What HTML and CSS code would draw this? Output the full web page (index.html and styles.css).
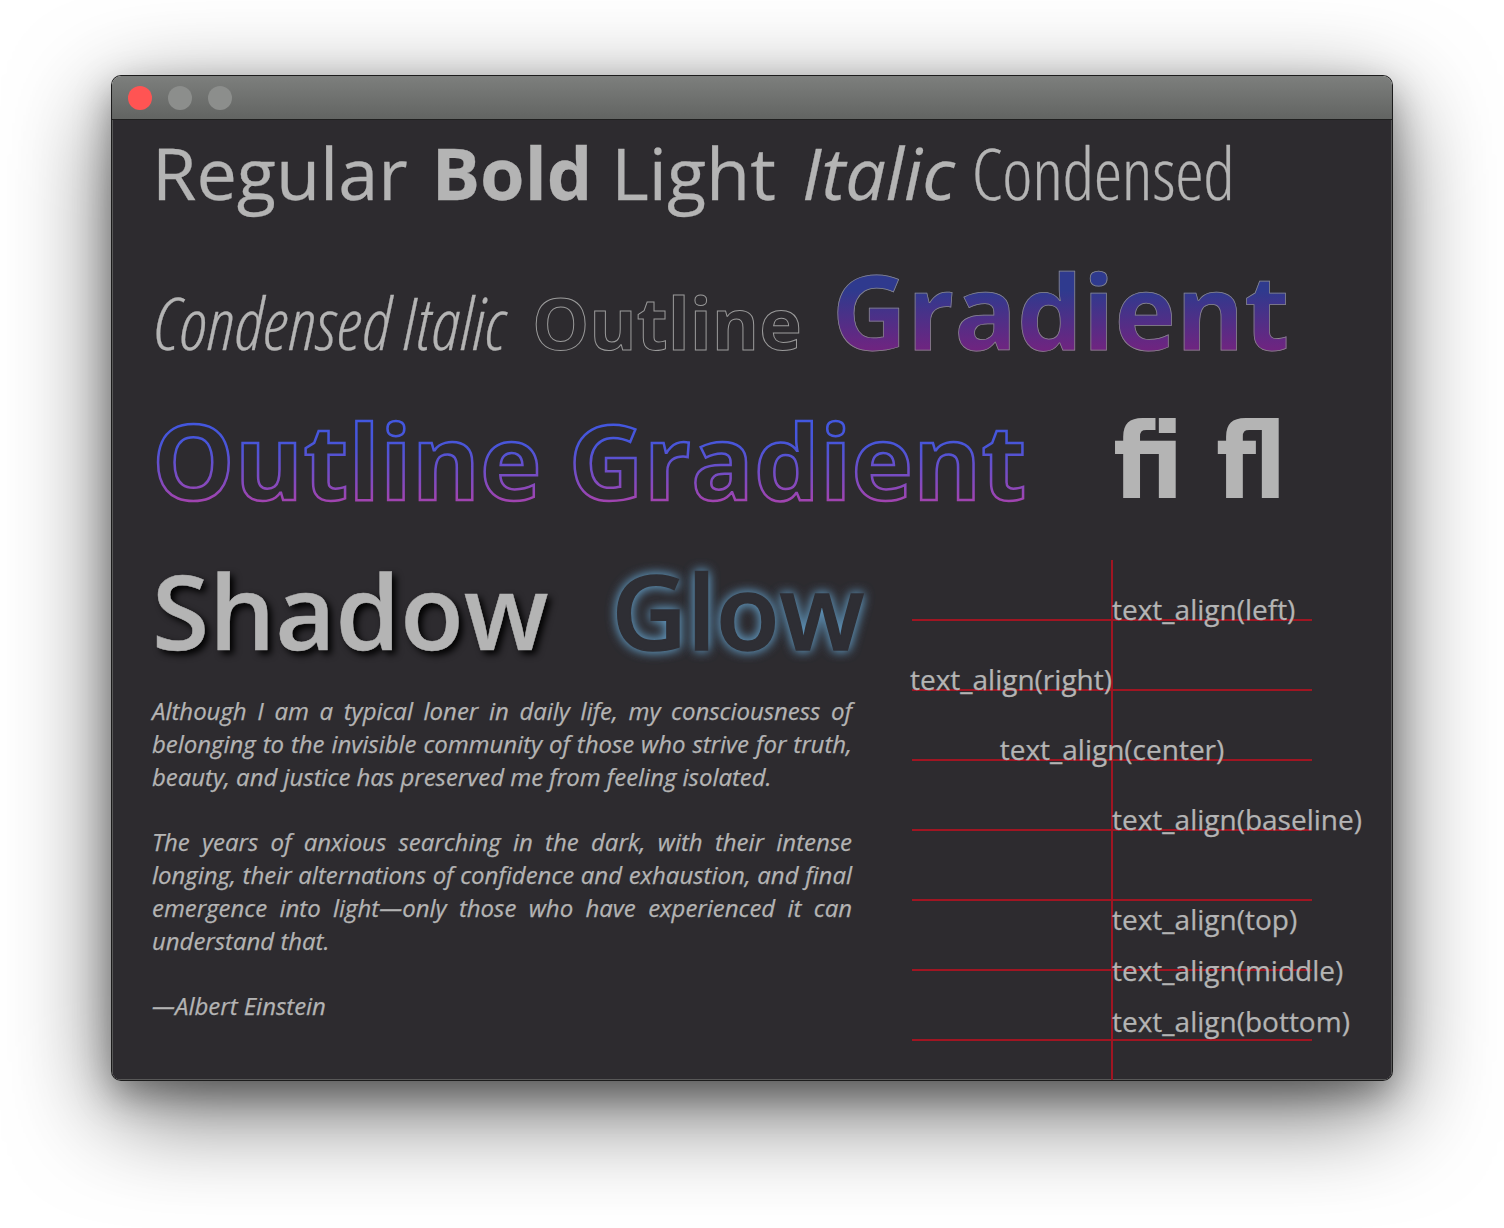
FILE: index.html
```html
<!DOCTYPE html>
<html lang="en">
<head>
  <meta charset="UTF-8">
  <title>Text demo</title>
  <link rel="stylesheet" href="styles.css">
</head>
<body>

<div class="window">
  <div class="titlebar">
    <span class="light light-close"></span>
    <span class="light"></span>
    <span class="light"></span>
  </div>

  <div class="content">
    <div class="row row-styles">
      <span class="regular">Regular</span>
      <span class="bold">Bold</span>
      <span class="thin">Light</span>
      <span class="italic">Italic</span>
      <span class="condensed">Condensed</span>
    </div>

    <div class="row row-second">
      <span class="condensed-italic">Condensed Italic</span>
      <span class="outline">Outline</span>
      <span class="gradient">Gradient</span>
    </div>

    <div class="row row-third">
      <svg class="outline-gradient" width="900" height="150" viewBox="0 0 900 150">
        <defs>
          <linearGradient id="strokeGrad" gradientUnits="userSpaceOnUse" x1="0" y1="35" x2="0" y2="115">
            <stop offset="0" stop-color="#4257e0"/>
            <stop offset="0.35" stop-color="#4a55d8"/>
            <stop offset="1" stop-color="#a044b0"/>
          </linearGradient>
        </defs>
        <text x="0" y="115">Outline Gradient</text>
      </svg>
      <span class="ligatures">&#xFB01; &#xFB02;</span>
    </div>

    <div class="lower">
      <div class="lower-left">
        <div class="row row-fourth">
          <span class="shadow">Shadow</span>
          <span class="glow">Glow</span>
        </div>
        <div class="quote">
          <p>Although I am a typical loner in daily life, my consciousness of belonging to the invisible community of those who strive for truth, beauty, and justice has preserved me from feeling isolated.</p>
          <p>The years of anxious searching in the dark, with their intense longing, their alternations of confidence and exhaustion, and final emergence into light&mdash;only those who have experienced it can understand that.</p>
          <p>&mdash;Albert Einstein</p>
        </div>
      </div>

      <div class="align-demo">
        <div class="axis"></div>
        <div class="guide guide-1"></div>
        <div class="guide guide-2"></div>
        <div class="guide guide-3"></div>
        <div class="guide guide-4"></div>
        <div class="guide guide-5"></div>
        <div class="guide guide-6"></div>
        <div class="guide guide-7"></div>
        <span class="label label-left">text_align(left)</span>
        <span class="label label-right">text_align(right)</span>
        <span class="label label-center">text_align(center)</span>
        <span class="label label-baseline">text_align(baseline)</span>
        <span class="label label-top">text_align(top)</span>
        <span class="label label-middle">text_align(middle)</span>
        <span class="label label-bottom">text_align(bottom)</span>
      </div>
    </div>
  </div>
</div>

</body>
</html>
```

FILE: styles.css
```css
body {
  margin: 0;
  padding: 76px 0 0 112px;
  height: 1228px;
  box-sizing: border-box;
  overflow: hidden;
  background: #fff;
  font-family: 'Open Sans', sans-serif;
}

.window {
  width: 1280px;
  height: 1004px;
  border-radius: 9px;
  overflow: hidden;
  box-shadow: 0 0 0 1px #1c1c1c, 0 30px 100px rgba(0, 0, 0, 0.6), 0 14px 36px rgba(0, 0, 0, 0.35);
  display: flex;
  flex-direction: column;
}

.titlebar {
  height: 44px;
  box-sizing: border-box;
  padding-left: 16px;
  display: flex;
  align-items: center;
  gap: 16px;
  background: linear-gradient(#7d7f7d, #626462);
  border-bottom: 1px solid #1f1f1f;
}

.light {
  width: 24px;
  height: 24px;
  border-radius: 50%;
  background: #8c8e8c;
}

.light-close {
  background: #ff5453;
}

.content {
  flex: 1;
  background: #2d2b2f;
  color: #b4b4b4;
  padding-left: 40px;
  box-shadow: inset 1px 0 #585858, inset -1px 0 #585858, inset 0 -1px #585858;
}

.row {
  display: flex;
  align-items: baseline;
}

.row-styles {
  height: 104px;
  gap: 25px;
  font-size: 72px;
  line-height: 104px;
  -webkit-text-stroke: 0.3px #b4b4b4;
}

.regular { font-weight: 400; }
.bold { font-weight: 700; margin-left: -1px; }
.thin { font-weight: 400; margin-left: -6px; }
.italic { font-weight: 400; font-style: italic; margin-left: 1px; }
.condensed { font-weight: 300; font-stretch: 75%; letter-spacing: -0.3px; margin-left: -8px; }

.row-second {
  height: 130px;
  margin-top: 21px;
  gap: 28px;
  font-size: 72px;
  line-height: 130px;
}

.condensed-italic {
  margin-left: 2px;
  font-weight: 300;
  font-style: italic;
  font-stretch: 75%;
  letter-spacing: 0.27px;
  -webkit-text-stroke: 0.3px #b4b4b4;
}

.outline {
  margin-left: -2px;
  font-weight: 700;
  color: transparent;
  -webkit-text-stroke: 1px #9a9a9a;
}

.gradient {
  margin-left: 2px;
  font-size: 104px;
  font-weight: 700;
  color: transparent;
  background: linear-gradient(#2f3a8e 35%, #702480 81%);
  -webkit-background-clip: text;
  background-clip: text;
  -webkit-text-stroke: 0.75px #8a8a8a;
}

.row-third {
  height: 150px;
  margin-top: 10px;
  align-items: flex-start;
}

.outline-gradient text {
  font-size: 104px;
  font-weight: 700;
  fill: none;
  stroke: url(#strokeGrad);
  stroke-width: 2.5px;
}

.ligatures {
  margin-top: 12px;
  margin-left: 61px;
  font-family: 'DejaVu Sans Condensed', sans-serif;
  font-size: 106px;
  font-weight: 700;
  line-height: 130px;
  word-spacing: -1px;
}

.lower {
  display: flex;
  margin-top: 10px;
}

.lower-left {
  width: 760px;
}

.row-fourth {
  height: 130px;
  gap: 64px;
  font-size: 104px;
  font-weight: 600;
  line-height: 130px;
}

.shadow {
  text-shadow: 4px 4px 7px #000;
  -webkit-text-stroke: 0.5px #b4b4b4;
}

.glow {
  margin-left: -1px;
  color: #2e2e34;
  -webkit-text-stroke: 1.5px #2e2e34;
  text-shadow: 0 0 12px #6096bd, 0 0 12px #5a8aab;
}

.quote {
  width: 700px;
  margin-top: 19px;
  font-size: 24px;
  font-style: italic;
  line-height: 33px;
  text-align: justify;
  letter-spacing: -0.03px;
  -webkit-text-stroke: 0.25px #b4b4b4;
}

.quote p {
  margin: 0 0 32px;
}

.align-demo {
  position: relative;
  width: 400px;
  height: 520px;
  margin-top: 15px;
}

.axis {
  position: absolute;
  left: 199px;
  top: 0;
  width: 2px;
  height: 520px;
  background: #a01522;
}

.guide {
  position: absolute;
  left: 0;
  width: 400px;
  height: 2px;
  background: #a01522;
}

.guide-1 { top: 59px; }
.guide-2 { top: 129px; }
.guide-3 { top: 199px; }
.guide-4 { top: 269px; }
.guide-5 { top: 339px; }
.guide-6 { top: 409px; }
.guide-7 { top: 479px; }

.label {
  position: absolute;
  left: 200px;
  font-size: 28px;
  line-height: 38px;
  white-space: nowrap;
  -webkit-text-stroke: 0.25px #b4b4b4;
}

.label-left { top: 30px; }
.label-right { top: 100px; transform: translateX(-100%); }
.label-center { top: 170px; transform: translateX(-50%); }
.label-baseline { top: 240px; }
.label-top { top: 340px; }
.label-middle { top: 391px; }
.label-bottom { top: 442px; }
```
